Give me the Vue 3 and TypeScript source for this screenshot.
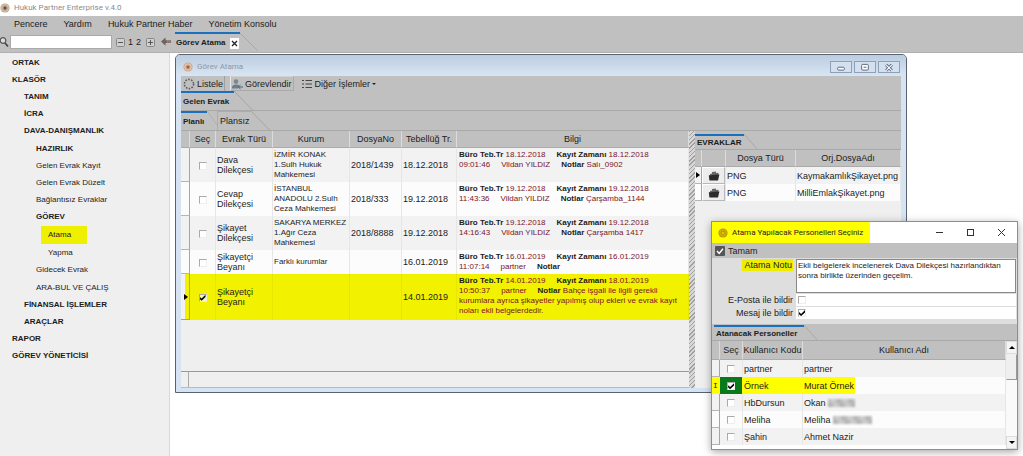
<script setup lang="ts">
import { ref } from 'vue'

interface NavItem {
  label: string
  level: number
  bold?: boolean
  active?: boolean
}

interface DocRow {
  type: string[]
  court: string[]
  fileNo: string
  date: string
  received: string
  saved: string
  time: string
  person: string
  note: string[]
  checked: boolean
}

interface Person {
  code: string
  name: string
  masked: number
  checked: boolean
}

const menu = ['Pencere', 'Yardım', 'Hukuk Partner Haber', 'Yönetim Konsolu']

const nav: NavItem[] = [
  { label: 'ORTAK', level: 0, bold: true },
  { label: 'KLASÖR', level: 0, bold: true },
  { label: 'TANIM', level: 1, bold: true },
  { label: 'İCRA', level: 1, bold: true },
  { label: 'DAVA-DANIŞMANLIK', level: 1, bold: true },
  { label: 'HAZIRLIK', level: 2, bold: true },
  { label: 'Gelen Evrak Kayıt', level: 2 },
  { label: 'Gelen Evrak Düzelt', level: 2 },
  { label: 'Bağlantısız Evraklar', level: 2 },
  { label: 'GÖREV', level: 2, bold: true },
  { label: 'Atama', level: 3, active: true },
  { label: 'Yapma', level: 3 },
  { label: 'Gidecek Evrak', level: 2 },
  { label: 'ARA-BUL VE ÇALIŞ', level: 2 },
  { label: 'FİNANSAL İŞLEMLER', level: 1, bold: true },
  { label: 'ARAÇLAR', level: 1, bold: true },
  { label: 'RAPOR', level: 0, bold: true },
  { label: 'GÖREV YÖNETİCİSİ', level: 0, bold: true },
]

const rows = ref<DocRow[]>([
  { type: ['Dava', 'Dilekçesi'], court: ['İZMİR KONAK', '1.Sulh Hukuk', 'Mahkemesi'], fileNo: '2018/1439', date: '18.12.2018', received: '18.12.2018', saved: '18.12.2018', time: '09:01:46', person: 'Vildan YILDIZ', note: ['Salı_0902'], checked: false },
  { type: ['Cevap', 'Dilekçesi'], court: ['İSTANBUL', 'ANADOLU 2.Sulh', 'Ceza Mahkemesi'], fileNo: '2018/333', date: '19.12.2018', received: '19.12.2018', saved: '19.12.2018', time: '11:43:36', person: 'Vildan YILDIZ', note: ['Çarşamba_1144'], checked: false },
  { type: ['Şikayet', 'Dilekçesi'], court: ['SAKARYA MERKEZ', '1.Ağır Ceza', 'Mahkemesi'], fileNo: '2018/8888', date: '19.12.2018', received: '19.12.2018', saved: '19.12.2018', time: '14:16:43', person: 'Vildan YILDIZ', note: ['Çarşamba 1417'], checked: false },
  { type: ['Şikayetçi', 'Beyanı'], court: ['Farklı kurumlar'], fileNo: '', date: '16.01.2019', received: '16.01.2019', saved: '16.01.2019', time: '11:07:14', person: 'partner', note: [''], checked: false },
  { type: ['Şikayetçi', 'Beyanı'], court: [], fileNo: '', date: '14.01.2019', received: '14.01.2019', saved: '18.01.2019', time: '10:50:37', person: 'partner', note: ['Bahçe işgali ile ilgili gerekli', 'kurumlara ayrıca şikayetler yapılmış olup ekleri ve evrak kayıt', 'noları ekli belgelerdedir.'], checked: true },
])

const files = ['KaymakamlıkŞikayet.png', 'MilliEmlakŞikayet.png']

const people = ref<Person[]>([
  { code: 'partner', name: 'partner', masked: 0, checked: false },
  { code: 'Örnek', name: 'Murat Örnek', masked: 0, checked: true },
  { code: 'HbDursun', name: 'Okan', masked: 9, checked: false },
  { code: 'Meliha', name: 'Meliha', masked: 13, checked: false },
  { code: 'Şahin', name: 'Ahmet Nazir', masked: 0, checked: false },
])

const search = ref('')
const note = ref('Ekli belgelerek incelenerek Dava Dilekçesi hazırlandıktan\nsonra birlikte üzerinden geçelim.')
const byMail = ref(false)
const byMessage = ref(true)
const shades = ['#a0a0a0', '#b9b9b9', '#a8a8a8', '#c4c4c4', '#9c9c9c', '#b0b0b0', '#cccccc']
const shade = (n: number): string => shades[(n * 5 + (n >> 2)) % shades.length]
</script>

<template>
  <div class="app">
    <header class="app-title">
      <svg class="logo" viewBox="0 0 10 10"><circle cx="5" cy="5" r="4.6" fill="#b99f8a" /><circle cx="5" cy="5" r="3.4" fill="none" stroke="#e6d3c3" stroke-width=".8" /><circle cx="5" cy="5" r="1.5" fill="#6b4c3c" /></svg>
      <span>Hukuk Partner Enterprise v.4.0</span>
    </header>

    <nav class="menu">
      <button v-for="m in menu" :key="m" type="button">{{ m }}</button>
    </nav>

    <div class="strip">
      <div class="tools">
        <svg class="lens" viewBox="0 0 9 12"><circle cx="3" cy="4.5" r="2.8" fill="#ddd" stroke="#555" stroke-width="1.2" /><path d="M5 7l3 3.5" stroke="#444" stroke-width="1.8" /></svg>
        <input v-model="search" class="search" type="text" aria-label="Ara" />
        <button type="button" class="glyph" aria-label="Daralt"><svg viewBox="0 0 9 9"><rect x=".5" y=".5" width="8" height="8" rx="1" fill="#cfcfcf" stroke="#888" /><path d="M2 4.5h5" stroke="#555" /></svg></button>
        <button type="button" class="num">1</button>
        <button type="button" class="num">2</button>
        <button type="button" class="glyph plus" aria-label="Genişlet"><svg viewBox="0 0 9 9"><rect x=".5" y=".5" width="8" height="8" rx="1" fill="#cfcfcf" stroke="#888" /><path d="M2 4.5h5M4.5 2v5" stroke="#555" /></svg></button>
        <button type="button" class="back" aria-label="Geri"><svg viewBox="0 0 12 10"><path d="M0 5l5-4.5v3h2v3H5v3z" fill="#6c6461" /><path d="M7 3.5h4v3H7z" fill="#93706a" /></svg></button>
      </div>
      <div class="doc-tab">
        <button type="button" class="doc-name">Görev Atama</button>
        <button type="button" class="doc-close" aria-label="Kapat"><svg viewBox="0 0 9 11"><path d="M2 3l5 5M7 3l-5 5" stroke="#222" stroke-width="1.3" /></svg></button>
      </div>
      <svg class="slant" viewBox="0 0 20 20"><path d="M0 1l18 18" stroke="#a9a9a9" fill="none" /></svg>
    </div>

    <div class="body">
      <aside class="side">
        <ul>
          <li v-for="n in nav" :key="n.label" :class="['lv' + n.level, { bold: n.bold, active: n.active }]">
            <a href="#">{{ n.label }}</a>
          </li>
        </ul>
      </aside>

      <main class="desk">
        <section class="win">
          <header class="win-title">
            <svg class="logo" viewBox="0 0 10 10"><circle cx="5" cy="5" r="4.6" fill="#d3a585" /><circle cx="5" cy="5" r="3.2" fill="none" stroke="#eed7c4" stroke-width=".8" /><circle cx="5" cy="5" r="1.5" fill="#8a6a58" /></svg>
            <h1>Görev Atama</h1>
            <div class="win-buttons">
              <button type="button" aria-label="Küçült"><svg viewBox="0 0 21 12"><rect x="7" y="5.5" width="7" height="3" rx="1" fill="#fff" stroke="#59657a" /></svg></button>
              <button type="button" aria-label="Büyüt"><svg viewBox="0 0 21 12"><rect x="7" y="2.5" width="7" height="6" rx="1" fill="#fff" stroke="#59657a" /><path d="M9 5.5h3" stroke="#59657a" /></svg></button>
              <button type="button" aria-label="Kapat"><svg viewBox="0 0 21 12"><path d="M7.5 3l6 6M13.5 3l-6 6" stroke="#59657a" stroke-width="3" /><path d="M7.5 3l6 6M13.5 3l-6 6" stroke="#fff" stroke-width="1.2" /></svg></button>
            </div>
          </header>

          <div class="client">
            <div class="bar">
              <button type="button" class="cmd"><svg viewBox="0 0 12 12"><circle cx="6" cy="6" r="4.6" fill="none" stroke="#5b5b5b" stroke-width="1.6" stroke-dasharray="1.6 1.3" /></svg>Listele</button>
              <button type="button" class="cmd raised"><svg viewBox="0 0 12 12"><circle cx="5" cy="3.6" r="2.3" fill="#7d8790" /><path d="M.8 10.600c0-3 1.600-4 4.200-4 1.500 0 2.400.4 3 1l-1 3z" fill="#6f7e8b" /><path d="M7 9h5M9.500 7L7.300 9l2.200 2" stroke="#35688f" fill="none" /></svg>Görevlendir</button>
              <button type="button" class="cmd"><svg viewBox="0 0 12 12"><path d="M1 2.500h2M1 6h2M1 9.500h2M4.500 2.500H11M4.500 6H11M4.500 9.500H11" stroke="#444" stroke-width="1.200" /></svg>Diğer İşlemler<i class="caret"></i></button>
            </div>
            <div class="tabs first">
              <button type="button" class="tab on">Gelen Evrak</button>
              <svg class="slant" viewBox="0 0 20 20"><path d="M0 0l19 19.500" stroke="#a4a4a4" fill="none" /></svg>
            </div>
            <div class="tabs second">
              <button type="button" class="tab on">Planlı</button>
              <svg class="slant small" viewBox="0 0 10 20"><path d="M0 0l10 14" stroke="#b0b0b0" fill="none" /></svg>
              <button type="button" class="tab off">Plansız</button>
              <svg class="slant" viewBox="0 0 20 20"><path d="M0 0l19 19.500" stroke="#a9a39c" fill="none" /></svg>
            </div>

            <div class="panes">
              <div class="grid-pane">
                <table class="grid">
                  <colgroup><col class="c-ind" /><col class="c-sel" /><col class="c-type" /><col class="c-court" /><col class="c-no" /><col class="c-date" /><col /></colgroup>
                  <thead>
                    <tr><th></th><th>Seç</th><th>Evrak Türü</th><th>Kurum</th><th>DosyaNo</th><th>Tebellüğ Tr.</th><th>Bilgi</th></tr>
                  </thead>
                  <tbody>
                    <tr v-for="(r, i) in rows" :key="i" :class="{ marked: r.checked, compact: i === 3 }">
                      <td class="ind"><i v-if="r.checked" class="pointer"></i></td>
                      <td class="mid"><input v-model="r.checked" type="checkbox" class="box" :aria-label="'Seç ' + (i + 1)" /></td>
                      <td><div v-for="t in r.type" :key="t">{{ t }}</div></td>
                      <td class="court"><div v-for="c in r.court" :key="c">{{ c }}</div></td>
                      <td>{{ r.fileNo }}</td>
                      <td>{{ r.date }}</td>
                      <td class="info">
                        <div><b>Büro Teb.Tr</b> {{ r.received }}<b class="gap">Kayıt Zamanı</b> {{ r.saved }}</div>
                        <div>{{ r.time }}<span class="gap">{{ r.person }}</span><b class="gap">Notlar</b> {{ r.note[0] }}</div>
                        <div v-for="l in r.note.slice(1)" :key="l">{{ l }}</div>
                      </td>
                    </tr>
                  </tbody>
                </table>
                <div class="foot"><i></i></div>
              </div>
              <div class="splitter"></div>
              <div class="file-pane">
                <div class="tabs third">
                  <button type="button" class="tab on">EVRAKLAR</button>
                  <svg class="slant" viewBox="0 0 20 20"><path d="M0 0l14 16" stroke="#a9a9a9" fill="none" /></svg>
                </div>
                <table class="grid files">
                  <colgroup><col class="f-ind" /><col class="f-icon" /><col class="f-type" /><col /></colgroup>
                  <thead><tr><th></th><th></th><th>Dosya Türü</th><th>Orj.DosyaAdı</th></tr></thead>
                  <tbody>
                    <tr v-for="(f, i) in files" :key="f">
                      <td class="ind"><i v-if="i === 0" class="pointer"></i></td>
                      <td class="icon"><button type="button" :aria-label="'Aç ' + f"><svg viewBox="0 0 12 10"><path d="M2 3l2-.6V1l4-.6V2l2.500-.2V4H2z" fill="#666" /><path d="M.8 4.200L11.400 3.400 10 9.500H1.400z" fill="#2b2b2b" /></svg></button></td>
                      <td>PNG</td>
                      <td>{{ f }}</td>
                    </tr>
                  </tbody>
                </table>
              </div>
            </div>
          </div>
        </section>
      </main>
    </div>

    <section class="dialog" role="dialog" aria-labelledby="dlg-title">
      <header class="dlg-title">
        <div class="dlg-name">
          <svg class="logo" viewBox="0 0 10 10"><circle cx="5" cy="5" r="4.600" fill="#b89600" /><circle cx="5" cy="5" r="3.200" fill="none" stroke="#e0c400" stroke-width=".8" /><circle cx="5" cy="5" r="1.500" fill="#e0c400" /></svg>
          <h2 id="dlg-title">Atama Yapılacak Personelleri Seçiniz</h2>
        </div>
        <div class="dlg-buttons">
          <button type="button" aria-label="Küçült"><svg viewBox="0 0 9 9"><path d="M1 4.500h7" stroke="#333" /></svg></button>
          <button type="button" aria-label="Büyüt"><svg viewBox="0 0 9 9"><rect x="1.500" y="1.500" width="6" height="6" fill="none" stroke="#333" /></svg></button>
          <button type="button" aria-label="Kapat"><svg viewBox="0 0 9 9"><path d="M1 1l7 7M8 1l-7 7" stroke="#333" /></svg></button>
        </div>
      </header>
      <div class="dlg-bar">
        <button type="button" class="cmd"><svg viewBox="0 0 10 10"><rect width="10" height="10" rx="1" fill="#555" /><path d="M2 5l2.200 2.400L8 2.800" stroke="#fff" stroke-width="1.500" fill="none" /></svg>Tamam</button>
      </div>
      <form class="form" @submit.prevent>
        <label for="note" class="hl"><span>Atama Notu</span></label>
        <textarea id="note" v-model="note" wrap="off"></textarea>
        <label for="mail">E-Posta ile bildir</label>
        <div class="field"><input id="mail" v-model="byMail" type="checkbox" class="box" /></div>
        <label for="msg">Mesaj ile bildir</label>
        <div class="field"><input id="msg" v-model="byMessage" type="checkbox" class="box" /></div>
      </form>
      <div class="tabs fourth">
        <button type="button" class="tab on">Atanacak Personeller</button>
        <svg class="slant" viewBox="0 0 20 20"><path d="M0 0l14 16" stroke="#a9a9a9" fill="none" /></svg>
      </div>
      <div class="people-wrap">
        <table class="grid people">
          <colgroup><col class="p-ind" /><col class="p-sel" /><col class="p-code" /><col /></colgroup>
          <thead><tr><th></th><th>Seç</th><th>Kullanıcı Kodu</th><th>Kullanıcı Adı</th></tr></thead>
          <tbody>
            <tr v-for="p in people" :key="p.code" :class="{ picked: p.checked }">
              <td class="ind"><span v-if="p.checked" class="ibeam">I</span></td>
              <td class="mid"><input v-model="p.checked" type="checkbox" class="box" :aria-label="'Seç ' + p.code" /></td>
              <td>{{ p.code }}</td>
              <td class="name">{{ p.name }}
                <svg v-if="p.masked" class="mask" :viewBox="`0 0 ${p.masked * 3} 8`" :width="p.masked * 3" height="8">
                  <template v-for="n in p.masked" :key="n">
                    <rect :x="(n - 1) * 3" y="0" width="3" height="4" :fill="shade(n)" />
                    <rect :x="(n - 1) * 3" y="4" width="3" height="4" :fill="shade(n + 3)" />
                  </template>
                </svg>
              </td>
            </tr>
          </tbody>
        </table>
        <div class="scroll">
          <button type="button" aria-label="Yukarı"><i class="up"></i></button>
          <div class="thumb"></div>
          <div class="track"></div>
          <button type="button" aria-label="Aşağı"><i class="down"></i></button>
        </div>
      </div>
    </section>
  </div>
</template>

<style>
html, body { margin: 0; height: 100%; overflow: hidden; background: #fff; }
#app { height: 100%; }
</style>

<style scoped>
.app { position: relative; display: flex; flex-direction: column; height: 100vh; overflow: hidden; background: #fff; color: #1c1c1c; font: 9px/10px "Liberation Sans", Arial, sans-serif; }
.app *, .app *::before, .app *::after { box-sizing: border-box; }
button { margin: 0; padding: 0; border: 0; background: none; color: inherit; font: inherit; white-space: nowrap; }
svg { display: block; }
h1, h2 { margin: 0; font-weight: 400; }
.logo { width: 10px; height: 10px; flex: none; }

.app-title { display: flex; align-items: center; gap: 4px; height: 16px; flex: none; color: #8c8c8c; font: 8px/12px Roboto, sans-serif; }
.menu { display: flex; gap: 16px; height: 16px; flex: none; padding-left: 14px; background: #c0c0c0; }
.strip { display: flex; height: 21px; flex: none; background: #c0c0c0; border-bottom: 1px solid #b0b0b0; }
.tools { display: flex; align-items: center; width: 175px; flex: none; }
.lens { width: 9px; height: 12px; margin-right: 1px; }
.search { width: 102px; height: 14px; margin-right: 4px; padding: 0 2px; border: 1px solid #aaa; background: #fff; font: inherit; }
.glyph { width: 9px; height: 9px; margin-right: 3px; }
.num { margin-right: 3px; }
.plus { margin: 0 6px 0 2px; }
.back { width: 11px; height: 10px; }
.doc-tab { display: flex; align-items: center; gap: 4px; width: 65px; border-top: 2px solid #1b70bd; }
.doc-name { padding-left: 1px; font-size: 8px; font-weight: 700; }
.doc-close { width: 9px; height: 11px; background: #fff; }
.slant { width: 20px; height: 20px; flex: none; }

.body { display: flex; flex: 1; min-height: 0; }
.side { width: 170px; flex: none; background: #efefef; border-right: 1px solid #d8d8d8; }
.side ul { display: flex; flex-direction: column; height: 311px; margin: 1px 0 0; padding: 0; list-style: none; }
.side li { display: flex; flex: 1; align-items: center; }
.side a { color: inherit; text-decoration: none; font-size: 8px; }
.side .bold a { font-weight: 700; }
.lv0 { padding-left: 12px; }
.lv1 { padding-left: 24px; }
.lv2 { padding-left: 36px; }
.lv3 { padding-left: 41px; }
.lv3 a { width: 46px; padding-left: 7px; line-height: 18px; }
.active a { background: #eef000; }

.desk { position: relative; flex: 1; }
.win { position: absolute; inset: 1px 116px 63px 5px; display: flex; flex-direction: column; padding: 0 5px 4px; border: 1px solid #59626e; border-radius: 5px 5px 0 0; background: #d6e3f2; }
.win-title { display: flex; align-items: center; gap: 4px; height: 21px; flex: none; margin: 0 -5px; padding: 3px 6px 0 7px; border-radius: 4px 4px 0 0; background: linear-gradient(#bccde0, #d8e5f3); color: #8e98a5; }
.win-title h1 { font: 8px/12px Roboto, sans-serif; }
.win-buttons { display: flex; gap: 2px; margin-left: auto; }
.win-buttons button { width: 22px; height: 12px; border: 1px solid #8fa1b8; background: #d3e0ef; }
.client { display: flex; flex: 1; flex-direction: column; min-height: 0; background: #c0c0c0; }
.bar { display: flex; gap: 5px; height: 15px; flex: none; }
.cmd { display: flex; align-items: center; gap: 3px; }
.cmd svg { width: 12px; height: 12px; }
.bar .cmd { gap: 2px; padding: 0 1px 0 2px; border-right: 1px solid #a0a0a0; }
.bar .cmd:last-child { border: 0; }
.bar .raised { padding-left: 0; border: 1px solid #aaa; border-top-color: #d0d0d0; border-left-color: #e8e8e8; }
.caret { border: 2px solid transparent; border-top-color: #222; border-bottom: 0; }
.tabs { display: flex; flex: none; }
.tab { padding: 0 2px; }
.tab.on { border-top: 2px solid #1b70bd; font-size: 8px; font-weight: 700; }
.first { height: 20px; border-bottom: 1px solid #a9a9a9; }
.second { height: 20px; border-bottom: 1px solid #a9a9a9; }
.first .on { width: 53px; text-align: left; }
.second .on { width: 26px; text-align: left; }
.small { width: 10px; }
.off { width: 34px; text-align: left; border-left: 1px solid #b0aca4; border-top: 1px solid #b0aca4; }

.panes { display: flex; flex: 1; min-height: 0; }
.grid-pane { display: flex; flex: 1; flex-direction: column; min-width: 0; background: #efefef; }
.grid { width: 100%; border-collapse: separate; border-spacing: 0; table-layout: fixed; }
.grid th { height: 17px; padding: 0; border-right: 1px solid #dcdcdc; border-bottom: 1px solid #ababab; background: #c0c0c0; font-weight: 400; white-space: nowrap; }
.grid td { height: 34px; padding: 0 1px; border-right: 1px solid #e6e6e6; white-space: nowrap; }
.grid tbody tr { background: #f2f2f2; }
.grid tbody tr:nth-child(even) { background: #fcfcfc; }
.grid .compact td { height: 23px; }
.grid .marked td { height: 46px; border-color: #e6e600; background: #f2f200; }
.grid td.ind { padding: 0; border-right: 1px solid #a5a5a5; border-bottom: 1px solid #b5b5b5; }
.grid .marked td.ind { background: linear-gradient(90deg, #f2f2f2 4px, #f2f200 4px); border-color: #b0b020; }
.grid .mid { text-align: center; }
.c-ind { width: 9px; }
.c-sel { width: 26px; }
.c-type { width: 57px; }
.c-court { width: 77px; }
.c-no { width: 52px; }
.c-date { width: 55px; }
.grid .court { font-size: 8px; }
.grid .info { vertical-align: top; padding: 2px; color: #7a1428; font-size: 8px; }
.info b { color: #1c1c1c; }
.gap { margin-left: 11px; }
.pointer { display: block; width: 0; margin-left: 3px; border: 3px solid transparent; border-left: 4px solid #000; border-right: 0; }
.box { position: relative; display: inline-block; width: 8px; height: 8px; margin: 0; border: 1px solid #eee; border-top-color: #aaa; border-left-color: #aaa; background: #fff; appearance: none; vertical-align: middle; }
.box:checked::before { content: ""; position: absolute; inset: 0; background: #000; clip-path: polygon(0 35%, 35% 65%, 100% 0, 100% 40%, 35% 100%, 0 70%); }
.marked .box { background: #f8f8a0; }
.foot { height: 17px; margin-top: auto; border-top: 1px solid #999; border-bottom: 1px solid #bbb; }
.foot i { display: block; width: 8px; height: 100%; border-right: 1px solid #aaa; }
.splitter { width: 6px; flex: none; background: repeating-linear-gradient(135deg, #a0a0a0 0 1px, #d8d8d8 1px 3px); }
.file-pane { width: 206px; flex: none; background: #efefef; }
.third { height: 19px; padding-top: 3px; background: #c0c0c0; border-bottom: 1px solid #a9a9a9; }
.third .on { width: 49px; text-align: left; }
.files th { height: 17px; }
.files td { height: 17px; }
.f-ind { width: 7px; }
.f-icon { width: 24px; }
.f-type { width: 70px; }
.files .ind .pointer { margin-left: 1px; }
.files .icon { padding: 0; }
.icon button { display: flex; align-items: center; justify-content: center; width: 100%; height: 17px; border: 1px solid #b8b8b8; border-top-color: #fff; border-left-color: #fff; background: #ededed; }
.icon svg { width: 12px; height: 10px; }

.dialog { position: absolute; top: 221px; right: 5px; width: 307px; border: 1px solid #8f9a50; background: #dedede; box-shadow: 0 2px 8px rgba(0, 0, 0, .35); }
.dlg-title { display: flex; justify-content: space-between; height: 21px; background: #fff; }
.dlg-name { display: flex; align-items: center; gap: 4px; width: 158px; padding-left: 6px; background: #ff0; }
.dlg-name h2 { font: 8px/12px Roboto, sans-serif; white-space: nowrap; }
.dlg-buttons { display: flex; align-items: center; gap: 22px; padding-right: 11px; }
.dlg-buttons button { width: 9px; height: 9px; }
.dlg-bar { display: flex; height: 15px; padding-left: 3px; background: #c0c0c0; }
.dlg-bar .cmd svg { width: 10px; height: 10px; }
.form { display: grid; grid-template-columns: 81px 1fr; grid-template-rows: 34px 12px 12px; column-gap: 3px; row-gap: 1px; height: 66px; padding: 1px 1px 0 0; }
.form label { text-align: right; line-height: 12px; }
.hl span { display: inline-block; padding: 0 1px 0 2px; background: #f0ec00; }
textarea { width: 100%; height: 34px; padding: 1px; border: 1px solid #888; background: #fff; color: inherit; font: 8px/10px "Liberation Sans", Arial, sans-serif; resize: none; overflow: hidden; }
.field { display: flex; align-items: center; padding-left: 2px; background: #fff; }
.fourth { height: 17px; padding: 1px 0 0 2px; background: #c0c0c0; border-bottom: 1px solid #a9a9a9; }
.fourth .on { width: 90px; text-align: left; }
.people-wrap { display: flex; height: 108px; overflow: hidden; background: #fff; }
.people-wrap table { flex: 1; width: 0; height: 0; }
.people th { height: 19px; }
.people td { height: 17px; }
.p-ind { width: 8px; }
.p-sel { width: 23px; }
.p-code { width: 60px; }
.people .ind { text-align: center; }
.ibeam { font: 8px/10px "Liberation Mono", monospace; }
.people .picked td { border-color: #ff0; background: #ff0; }
.people .picked td.mid { background: #077a1c; }
.people .picked td.name { background: linear-gradient(90deg, #ff0 52px, #fcfcfc 52px); border-color: #e6e6e6; }
.mask { display: inline-block; vertical-align: middle; filter: blur(1px); opacity: .8; }
.scroll { display: flex; flex-direction: column; width: 11px; flex: none; background: #f0f0f0; }
.scroll button { height: 13px; display: flex; align-items: center; justify-content: center; background: #f4f4f4; border: 1px solid #ddd; }
.thumb { height: 26px; border: 1px solid #999; border-top-color: #eee; border-left-color: #eee; background: #efefef; }
.track { flex: 1; background: #fafafa; }
.up, .down { border: 3px solid transparent; }
.up { border-bottom-color: #000; border-top: 0; }
.down { border-top-color: #000; border-bottom: 0; }
</style>
